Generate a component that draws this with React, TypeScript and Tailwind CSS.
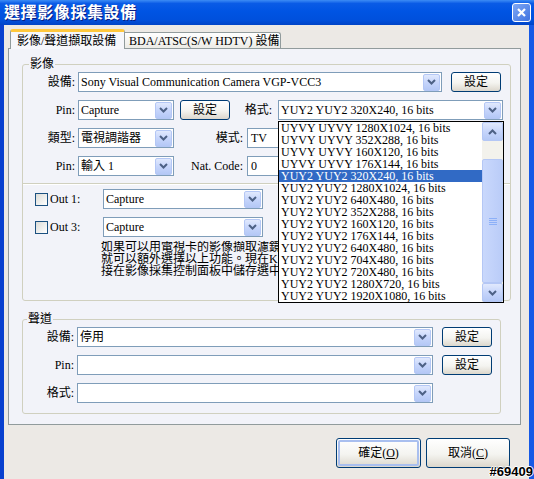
import React from "react";

const F = "font-['Liberation_Serif','Noto_Sans_CJK_TC',serif]";

function Arrow({ up = false }: { up?: boolean }) {
  return (
    <svg width="9" height="6" viewBox="0 0 9 6">
      <path
        d={up ? "M1 5 L4.5 1.5 L8 5" : "M1 1 L4.5 4.5 L8 1"}
        fill="none"
        stroke="#4D6185"
        strokeWidth="2"
      />
    </svg>
  );
}

function DropBtn({ up = false, className = "" }: { up?: boolean; className?: string }) {
  return (
    <div
      className={`w-[17px] h-[17px] shrink-0 rounded-[2px] border border-[#B4C7F5] bg-[linear-gradient(to_bottom,#E1E9FD,#C6D5FB_50%,#B4C8F6)] flex items-center justify-center ${className}`}
    >
      <Arrow up={up} />
    </div>
  );
}

function Combo({ className = "", text = "" }: { className?: string; text?: React.ReactNode }) {
  return (
    <div className={`h-[20px] shrink-0 border border-[#7F9DB9] bg-white flex items-center ${className}`}>
      <div className="flex-1 pl-[2px] text-[12px] leading-[14px] whitespace-nowrap overflow-hidden">{text}</div>
      <DropBtn className="mr-px" />
    </div>
  );
}

function Input({ className = "", text = "" }: { className?: string; text?: string }) {
  return (
    <div className={`h-[20px] shrink-0 border border-r-0 border-[#7F9DB9] bg-white flex items-center pl-[3px] text-[12px] ${className}`}>
      {text}
    </div>
  );
}

function Btn({ className = "", children }: { className?: string; children: React.ReactNode }) {
  return (
    <div
      className={`h-[20px] shrink-0 rounded-[3px] border border-[#003C74] bg-[linear-gradient(to_bottom,#FFFFFF,#F4F4F0_55%,#DCD7CC)] flex items-center justify-center text-[12px] ${className}`}
    >
      {children}
    </div>
  );
}

function Label({ className = "", children }: { className?: string; children: React.ReactNode }) {
  return <div className={`shrink-0 text-right text-[12px] leading-[14px] whitespace-nowrap ${className}`}>{children}</div>;
}

function Check() {
  return (
    <div className="w-[13px] h-[13px] shrink-0 border border-[#1C5180] bg-[linear-gradient(135deg,#DCDCD7,#FFFFFF)]" />
  );
}

const items = [
  "UYVY UYVY 1280X1024, 16 bits",
  "UYVY UYVY 352X288, 16 bits",
  "UYVY UYVY 160X120, 16 bits",
  "UYVY UYVY 176X144, 16 bits",
  "YUY2 YUY2 320X240, 16 bits",
  "YUY2 YUY2 1280X1024, 16 bits",
  "YUY2 YUY2 640X480, 16 bits",
  "YUY2 YUY2 352X288, 16 bits",
  "YUY2 YUY2 160X120, 16 bits",
  "YUY2 YUY2 176X144, 16 bits",
  "YUY2 YUY2 640X480, 16 bits",
  "YUY2 YUY2 704X480, 16 bits",
  "YUY2 YUY2 720X480, 16 bits",
  "YUY2 YUY2 1280X720, 16 bits",
  "YUY2 YUY2 1920X1080, 16 bits",
];

export default function App() {
  return (
    <div className={`w-[534px] h-[479px] overflow-hidden relative bg-[linear-gradient(to_right,#0840CF,#1659E6)] flex flex-col text-black ${F}`}>
      {/* Title bar */}
      <div className="h-[25px] shrink-0 flex items-center justify-between pl-[4px] pr-[3px] bg-[linear-gradient(to_bottom,#3D8CF5_0%,#0A5BE6_14%,#0054E3_45%,#0050DC_80%,#0043C6_100%)]">
        <div className="text-[16px] leading-[18px] font-bold text-white tracking-[0.6px] [text-shadow:1px_1px_0_#0A1E83]">
          選擇影像採集設備
        </div>
        <div className="w-[19px] h-[19px] rounded-[3px] border border-white bg-[linear-gradient(135deg,#7FA8F5,#3F73E0)] flex items-center justify-center">
          <svg width="11" height="11" viewBox="0 0 11 11">
            <path d="M2 2 L9 9 M9 2 L2 9" stroke="white" strokeWidth="2.2" />
          </svg>
        </div>
      </div>

      {/* Body */}
      <div className="flex-1 ml-[4px] mr-[5px] bg-[#ECE9E5] flex flex-col">
        {/* Tabs */}
        <div className="flex items-end h-[23px] pl-[6px] pt-[4px]">
          <div className="relative z-10 w-[115px] h-[20px] -mb-px bg-[#F6F7FB] border-x border-[#919B9C] border-t-[3px] border-t-[#FFC83C] rounded-t-[3px] flex items-center pl-[6px] text-[12px] whitespace-nowrap">
            影像/聲道擷取設備
          </div>
          <div className="w-[156px] h-[16px] bg-[linear-gradient(to_bottom,#FFFFFF,#ECEBE6)] border-t border-r border-[#919B9C] rounded-tr-[3px] flex items-center pl-[4px] text-[12px] whitespace-nowrap">
            BDA/ATSC(S/W HDTV) 設備
          </div>
        </div>

        {/* Panel */}
        <div className="ml-[4px] w-[513px] h-[377px] border border-[#919B9C] bg-[#F2F3F9] flex flex-col">
          {/* 影像 */}
          <fieldset className="ml-[13px] mt-[8px] w-[489px] h-[244px] shrink-0 border border-[#D0D0BF] rounded-[3px]">
            <legend className="ml-[6px] px-[1px] text-[12px] leading-[14px]">影像</legend>
            <div className="pt-[1px] flex flex-col">
              <div className="flex items-center h-[20px]">
                <Label className="w-[52px]">設備:</Label>
                <Combo className="ml-[3px] w-[364px]" text="Sony Visual Communication Camera VGP-VCC3" />
                <Btn className="ml-[9px] w-[50px]">設定</Btn>
              </div>
              <div className="flex items-center h-[20px] mt-[8px]">
                <Label className="w-[52px]">Pin:</Label>
                <Combo className="ml-[3px] w-[96px]" text="Capture" />
                <Btn className="ml-[6px] w-[50px]">設定</Btn>
                <Label className="w-[42px]">格式:</Label>
                <Combo className="ml-[6px] w-[225px]" text="YUY2 YUY2 320X240, 16 bits" />
              </div>
              <div className="flex items-center h-[20px] mt-[8px]">
                <Label className="w-[52px]">類型:</Label>
                <Combo className="ml-[3px] w-[96px]" text="電視調諧器" />
                <Label className="w-[69px]">模式:</Label>
                <Input className="ml-[4px] w-[31px]" text="TV" />
              </div>
              <div className="flex items-center h-[20px] mt-[8px]">
                <Label className="w-[52px]">Pin:</Label>
                <Combo className="ml-[3px] w-[96px]" text="輸入 1" />
                <Label className="w-[69px]">Nat. Code:</Label>
                <Input className="ml-[4px] w-[31px]" text="0" />
              </div>
              <div className="mt-[7px] h-[2px] border-t border-[#D0D0BF] border-b border-b-white" />
              <div className="flex items-center h-[20px] mt-[4px]">
                <div className="ml-[12px]"><Check /></div>
                <div className="ml-[2px] w-[52px] text-[12px]">Out 1:</div>
                <Combo className="ml-[1px] w-[160px]" text="Capture" />
              </div>
              <div className="flex items-center h-[20px] mt-[8px]">
                <div className="ml-[12px]"><Check /></div>
                <div className="ml-[2px] w-[52px] text-[12px]">Out 3:</div>
                <Combo className="ml-[1px] w-[160px]" text="Capture" />
              </div>
              <div className="mt-[4px] ml-[78px] w-[177px] overflow-hidden text-[12px] leading-[12px] whitespace-nowrap">
                <div>如果可以用電視卡的影像擷取濾鏡</div>
                <div>就可以額外選擇以上功能。現在K</div>
                <div>接在影像採集控制面板中儲存選中</div>
              </div>
            </div>
          </fieldset>

          {/* 聲道 */}
          <fieldset className="ml-[13px] mt-[11px] w-[479px] h-[102px] shrink-0 border border-[#D0D0BF] rounded-[3px]">
            <legend className="ml-[4px] px-[1px] text-[12px] leading-[14px]">聲道</legend>
            <div className="pt-[1px] flex flex-col">
              <div className="flex items-center h-[20px]">
                <Label className="w-[51px]">設備:</Label>
                <Combo className="ml-[3px] w-[356px]" text="停用" />
                <Btn className="ml-[9px] w-[50px]">設定</Btn>
              </div>
              <div className="flex items-center h-[20px] mt-[8px]">
                <Label className="w-[51px]">Pin:</Label>
                <Combo className="ml-[3px] w-[356px]" />
                <Btn className="ml-[9px] w-[50px]">設定</Btn>
              </div>
              <div className="flex items-center h-[20px] mt-[8px]">
                <Label className="w-[51px]">格式:</Label>
                <Combo className="ml-[3px] w-[356px]" />
              </div>
            </div>
          </fieldset>
        </div>

        {/* Bottom buttons */}
        <div className="flex justify-end gap-[5px] mt-[13px] pr-[19px]">
          <div className="w-[85px] h-[30px] rounded-[3px] border border-[#003C74] bg-[linear-gradient(to_bottom,#FFFFFF,#F4F4F0_55%,#DCD7CC)] p-px">
            <div className="w-full h-full rounded-[2px] border-2 border-[#A9BFEF] flex items-center justify-center text-[12px]">
              確定(<span className="underline">O</span>)
            </div>
          </div>
          <div className="w-[84px] h-[30px] rounded-[3px] border border-[#003C74] bg-[linear-gradient(to_bottom,#FFFFFF,#F4F4F0_55%,#DCD7CC)] flex items-center justify-center text-[12px]">
            取消(<span className="underline">C</span>)
          </div>
        </div>
      </div>

      {/* Drop-down list overlay */}
      <div className="absolute left-[278px] top-[121px] w-[226px] h-[182px] border border-black bg-white flex">
        <div className="w-[203px] flex flex-col">
          {items.map((t, i) => (
            <div
              key={i}
              className={`h-[12px] pl-[2px] text-[12px] leading-[12px] whitespace-nowrap ${
                i === 4 ? "bg-[#316AC5] text-white" : ""
              }`}
            >
              {t}
            </div>
          ))}
        </div>
        <div className="w-[21px] flex flex-col bg-[#F3F2EC]">
          <DropBtn up className="w-[21px] h-[19px]" />
          <div className="h-[18px]" />
          <div className="h-[124px] rounded-[2px] border border-[#B4C7F5] bg-[linear-gradient(to_right,#C9D8FC,#BACCF8)] flex items-center justify-center">
            <svg width="8" height="7" viewBox="0 0 8 7">
              <path d="M0 0.5 H8 M0 2.5 H8 M0 4.5 H8 M0 6.5 H8" stroke="#8CB0F8" strokeWidth="1" />
            </svg>
          </div>
          <DropBtn className="w-[21px] h-[19px]" />
        </div>
      </div>

      {/* watermark */}
      <div className="absolute right-[1px] bottom-0 text-[13px] leading-[15px] font-bold font-['Liberation_Sans',sans-serif] text-black [text-shadow:1px_0_0_#fff,-1px_0_0_#fff,0_1px_0_#fff,0_-1px_0_#fff]">
        #69409
      </div>
    </div>
  );
}
